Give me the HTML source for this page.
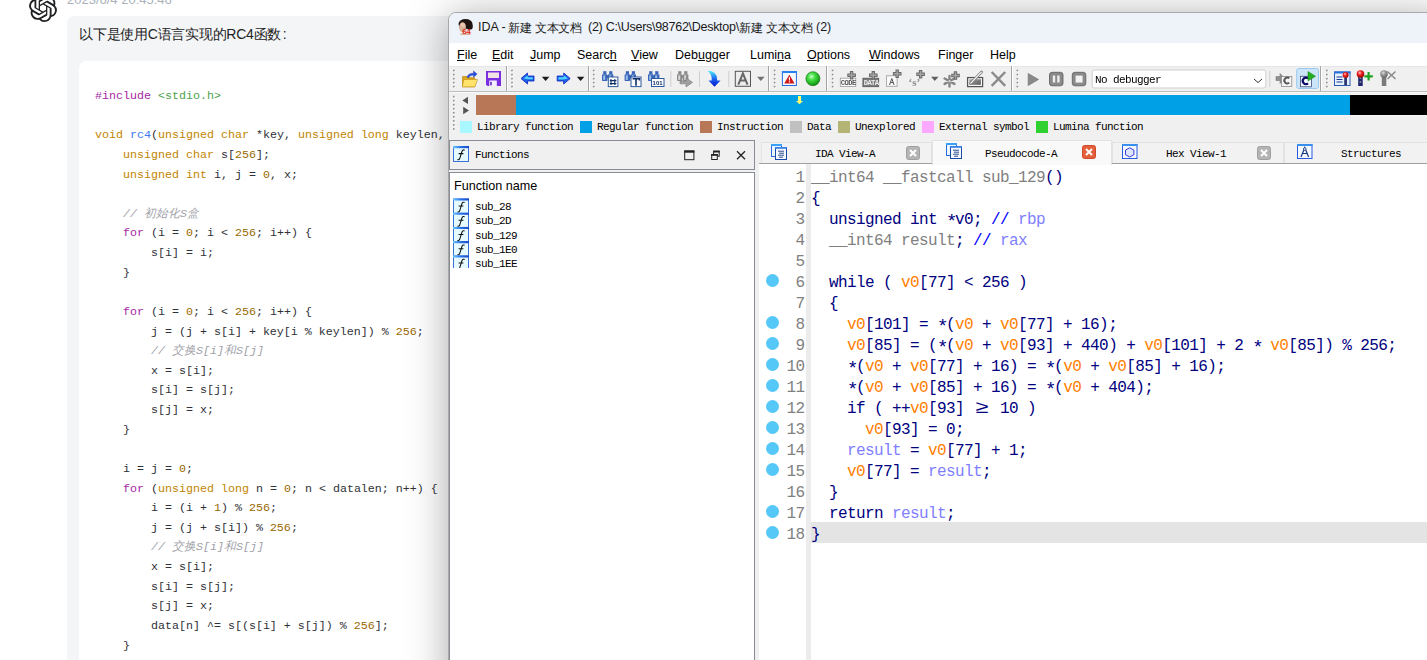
<!DOCTYPE html>
<html><head><meta charset="utf-8">
<style>
*{margin:0;padding:0;box-sizing:border-box}
html,body{width:1427px;height:660px;overflow:hidden;background:#fff;font-family:"Liberation Sans",sans-serif;position:relative}
.a{position:absolute}
.mono{font-family:"Liberation Mono",monospace}
/* chat */
#bubble{left:67px;top:16px;width:1400px;height:700px;background:#f4f5f7;border-radius:7px}
#code{left:79px;top:61px;width:1400px;height:700px;background:#fff;border-radius:7px}
#cl{left:95px;top:87px;font-family:"Liberation Mono",monospace;font-size:11.67px;line-height:19.63px;color:#2f3137;white-space:pre}
.kw{color:#a626a4}.ty{color:#c18401}.nu{color:#986801}.fn{color:#4078f2}.st{color:#50a14f}.cm{color:#a0a1a7;font-style:italic}
/* ida */
#code2{font-family:"Liberation Mono",monospace;font-size:16px;letter-spacing:-0.6px;line-height:21px;white-space:pre;color:#000080}

#win{left:448px;top:12px;width:1000px;height:700px;background:#f0f0f0;border:1px solid #a8a8a8;border-radius:8px 0 0 0;box-shadow:0 4px 40px rgba(0,0,0,0.34)}
.menu{top:48px;font-size:12.5px;color:#000;white-space:nowrap}
.leg{top:121px;width:12px;height:12px}
.legt{top:121px;font-family:"Liberation Mono",monospace;font-size:11px;letter-spacing:-0.6px;color:#000;white-space:nowrap}
.tab{top:142px;height:21px;background:#f2f2f2;border:1px solid #e2e2e2;border-bottom:none}
.tab.act{top:140px;height:25px;background:#f9f9f9;z-index:2}
.tabt{top:148px;font-family:"Liberation Mono",monospace;font-size:11px;letter-spacing:-0.6px;color:#000;white-space:nowrap;z-index:3}
#lnum{left:760px;top:168px;width:44.4px;text-align:right;font-family:"Liberation Mono",monospace;font-size:16px;letter-spacing:-0.6px;line-height:21px;color:#808080;white-space:pre}
#code2{left:811px;top:168px}

.v{color:#ff8000}.r{color:#8080ff}.g{color:#808080}.c{color:#0000ff}
.dot{left:766px;width:13px;height:13px;border-radius:50%;background:#55c8f8}
.ttl{top:20px;font-size:12.5px;color:#1a1a1a;white-space:nowrap}.cj{font-size:12px;letter-spacing:-0.2px}
.bmf{font-family:"Liberation Mono",monospace;font-size:11px;letter-spacing:-0.6px;color:#000;white-space:nowrap}
.ast{display:inline-block;width:9px;text-align:center;font-size:19px;line-height:10px;letter-spacing:0;position:relative;top:3px}
</style></head><body>
<div class="a" id="bubble"></div>
<div class="a" id="code"></div>

<svg class="a" style="left:29px;top:-6px" width="28" height="28" viewBox="0 0 24 24"><path fill="#202123" d="M22.2819 9.8211a5.9847 5.9847 0 0 0-.5157-4.9108 6.0462 6.0462 0 0 0-6.5098-2.9A6.0651 6.0651 0 0 0 4.9807 4.1818a5.9847 5.9847 0 0 0-3.9977 2.9 6.0462 6.0462 0 0 0 .7427 7.0966 5.98 5.98 0 0 0 .511 4.9107 6.051 6.051 0 0 0 6.5146 2.9001A5.9847 5.9847 0 0 0 13.2599 24a6.0557 6.0557 0 0 0 5.7718-4.2058 5.9894 5.9894 0 0 0 3.9977-2.9001 6.0557 6.0557 0 0 0-.7475-7.0729zm-9.022 12.6081a4.4755 4.4755 0 0 1-2.8764-1.0408l.1419-.0804 4.7783-2.7582a.7948.7948 0 0 0 .3927-.6813v-6.7369l2.02 1.1686a.071.071 0 0 1 .038.052v5.5826a4.504 4.504 0 0 1-4.4945 4.4944zm-9.6607-4.1254a4.4708 4.4708 0 0 1-.5346-3.0137l.142.0852 4.783 2.7582a.7712.7712 0 0 0 .7806 0l5.8428-3.3685v2.3324a.0804.0804 0 0 1-.0332.0615L9.74 19.9502a4.4992 4.4992 0 0 1-6.1408-1.6464zM2.3408 7.8956a4.485 4.485 0 0 1 2.3655-1.9728V11.6a.7664.7664 0 0 0 .3879.6765l5.8144 3.3543-2.0201 1.1685a.0757.0757 0 0 1-.071 0l-4.8303-2.7865A4.504 4.504 0 0 1 2.3408 7.872zm16.5963 3.8558L13.1038 8.364 15.1192 7.2a.0757.0757 0 0 1 .071 0l4.8303 2.7913a4.4944 4.4944 0 0 1-.6765 8.1042v-5.6772a.79.79 0 0 0-.407-.667zm2.0107-3.0231l-.142-.0852-4.7735-2.7818a.7759.7759 0 0 0-.7854 0L9.409 9.2297V6.8974a.0662.0662 0 0 1 .0284-.0615l4.8303-2.7866a4.4992 4.4992 0 0 1 6.6802 4.66zM8.3065 12.863l-2.02-1.1638a.0804.0804 0 0 1-.038-.0567V6.0742a4.4992 4.4992 0 0 1 7.3757-3.4537l-.142.0805L8.704 5.459a.7948.7948 0 0 0-.3927.6813zm1.0976-2.3654l2.602-1.4998 2.6069 1.4998v2.9994l-2.5974 1.4997-2.6067-1.4997Z"/></svg>
<div class="a" style="left:67px;top:-8px;font-size:13px;color:#aab1bb;white-space:nowrap">2023/6/4 20:45:46</div>
<div class="a" id="intro" style="left:79px;top:26px;font-size:14px;letter-spacing:-0.25px;color:#222;white-space:nowrap">以下是使用C语言实现的RC4函数<span style="margin-left:1.5px">:</span></div>
<div class="a" id="cl"><span class="kw">#include</span> <span class="st">&lt;stdio.h&gt;</span>

<span class="ty">void</span> <span class="fn">rc4</span>(<span class="ty">unsigned</span> <span class="ty">char</span> *key, <span class="ty">unsigned</span> <span class="ty">long</span> keylen, <span class="ty">unsigned</span> <span class="ty">char</span> *data, <span class="ty">unsigned</span> <span class="ty">long</span> datalen) {
    <span class="ty">unsigned</span> <span class="ty">char</span> s[<span class="nu">256</span>];
    <span class="ty">unsigned</span> <span class="ty">int</span> i, j = <span class="nu">0</span>, x;

    <span class="cm">// 初始化S盒</span>
    <span class="kw">for</span> (i = <span class="nu">0</span>; i &lt; <span class="nu">256</span>; i++) {
        s[i] = i;
    }

    <span class="kw">for</span> (i = <span class="nu">0</span>; i &lt; <span class="nu">256</span>; i++) {
        j = (j + s[i] + key[i % keylen]) % <span class="nu">256</span>;
        <span class="cm">// 交换S[i]和S[j]</span>
        x = s[i];
        s[i] = s[j];
        s[j] = x;
    }

    i = j = <span class="nu">0</span>;
    <span class="kw">for</span> (<span class="ty">unsigned</span> <span class="ty">long</span> n = <span class="nu">0</span>; n &lt; datalen; n++) {
        i = (i + <span class="nu">1</span>) % <span class="nu">256</span>;
        j = (j + s[i]) % <span class="nu">256</span>;
        <span class="cm">// 交换S[i]和S[j]</span>
        x = s[i];
        s[i] = s[j];
        s[j] = x;
        data[n] ^= s[(s[i] + s[j]) % <span class="nu">256</span>];
    }
}</div>


<div class="a" id="win"></div>
<div class="a" style="left:449px;top:13px;width:980px;height:30px;background:#eef3f9;border-radius:7px 0 0 0"></div>
<svg class="a" style="left:455px;top:17px" width="20" height="20" viewBox="455 17 20 20">
<ellipse cx="465.5" cy="24" rx="7" ry="5" fill="#1e1412"/><circle cx="469.6" cy="26.5" r="3.2" fill="#1e1412"/>
<ellipse cx="462.5" cy="27.3" rx="3.4" ry="5" fill="#d9b098"/><ellipse cx="463" cy="25" rx="2.4" ry="2" fill="#e8c8b0"/>
<ellipse cx="465.5" cy="34.2" rx="5.5" ry="0.9" fill="#d9b098"/>
<text x="462.3" y="34" font-family="Liberation Sans" font-weight="bold" font-size="8" letter-spacing="-0.5" fill="#e02818">64</text>
</svg><div class="a ttl" style="left:478px">IDA -</div>
<div class="a ttl cj" style="left:508px">新建 文本文档</div>
<div class="a ttl" style="left:588px;letter-spacing:-0.28px">(2) C:\Users\98762\Desktop\</div>
<div class="a ttl cj" style="left:739px">新建 文本文档</div>
<div class="a ttl" style="left:816px">(2)</div>
<div class="a" style="left:449px;top:43px;width:980px;height:23px;background:#fff"></div>
<div class="a menu" style="left:457px"><u>F</u>ile</div>
<div class="a menu" style="left:492px"><u>E</u>dit</div>
<div class="a menu" style="left:530px"><u>J</u>ump</div>
<div class="a menu" style="left:577px">Searc<u>h</u></div>
<div class="a menu" style="left:631px"><u>V</u>iew</div>
<div class="a menu" style="left:675px">Deb<u>u</u>gger</div>
<div class="a menu" style="left:750px">Lumi<u>n</u>a</div>
<div class="a menu" style="left:807px"><u>O</u>ptions</div>
<div class="a menu" style="left:869px"><u>W</u>indows</div>
<div class="a menu" style="left:938px">Finger</div>
<div class="a menu" style="left:990px">Help</div>
<div class="a" style="left:449px;top:66px;width:980px;height:25px;background:#f0f0f0;border-top:1px solid #e6e6e6"></div>
<div class="a" style="left:449px;top:91px;width:980px;height:1px;background:#bdbdbd"></div>
<div class="a" style="left:449px;top:92px;width:980px;height:1px;background:#fafafa"></div>
<div class="a" style="left:476px;top:94px;width:960px;height:1px;background:#fbf6f2"></div><div class="a" style="left:476px;top:115px;width:960px;height:1px;background:#fbf6f2"></div>
<!--TB--><svg class="a" style="left:449px;top:66px;will-change:transform" width="980" height="26" viewBox="449 66 980 26"><rect x="453.8" y="70.5" width="1.6" height="1.6" fill="#ffffff"/><rect x="453" y="69.7" width="1.6" height="1.6" fill="#8c8c8c"/><rect x="453.8" y="74.6" width="1.6" height="1.6" fill="#ffffff"/><rect x="453" y="73.8" width="1.6" height="1.6" fill="#8c8c8c"/><rect x="453.8" y="78.7" width="1.6" height="1.6" fill="#ffffff"/><rect x="453" y="77.9" width="1.6" height="1.6" fill="#8c8c8c"/><rect x="453.8" y="82.6" width="1.6" height="1.6" fill="#ffffff"/><rect x="453" y="81.8" width="1.6" height="1.6" fill="#8c8c8c"/><rect x="453.8" y="86.6" width="1.6" height="1.6" fill="#ffffff"/><rect x="453" y="85.8" width="1.6" height="1.6" fill="#8c8c8c"/><path d="M462.5 76.5 h5 l1 1.2 h6.3 v2 h2.6 l-2.6 7.3 h-12.3 z" fill="#d9a520" stroke="#b98a10" stroke-width="0.7"/><path d="M464.3 80 h12.8 l-2.4 6.5 h-12 z" fill="#ffe36a"/><path d="M467 77 q1.5-4 6.5-3.8 v-2.3 l3.6 3.2 -3.6 3.2 v-2.2 q-3.5 0 -5 2.8z" fill="#2850e0" stroke="#1a2ea0" stroke-width="0.4"/><path d="M486 71 h15 v15 h-13.5 l-1.5-1.5 z" fill="#7a2ee0"/><rect x="488" y="72.5" width="11" height="5.5" fill="#f2e2e6"/><rect x="489.3" y="80.5" width="7.5" height="5.5" fill="#f4f0ff"/><rect x="490.2" y="81.8" width="1.6" height="3.5" fill="#6a28c8"/><rect x="506" y="66" width="1" height="25" fill="#a4a4a4"/><rect x="507" y="66" width="1" height="25" fill="#ffffff"/><rect x="512.0" y="70.5" width="1.6" height="1.6" fill="#ffffff"/><rect x="511.2" y="69.7" width="1.6" height="1.6" fill="#8c8c8c"/><rect x="512.0" y="74.6" width="1.6" height="1.6" fill="#ffffff"/><rect x="511.2" y="73.8" width="1.6" height="1.6" fill="#8c8c8c"/><rect x="512.0" y="78.7" width="1.6" height="1.6" fill="#ffffff"/><rect x="511.2" y="77.9" width="1.6" height="1.6" fill="#8c8c8c"/><rect x="512.0" y="82.6" width="1.6" height="1.6" fill="#ffffff"/><rect x="511.2" y="81.8" width="1.6" height="1.6" fill="#8c8c8c"/><rect x="512.0" y="86.6" width="1.6" height="1.6" fill="#ffffff"/><rect x="511.2" y="85.8" width="1.6" height="1.6" fill="#8c8c8c"/><path d="M521 78.5 L527.5 73 V76 H534 V81 H527.5 V84 Z" fill="#1e62e8" stroke="#0a20c0" stroke-width="0.8"/><path d="M523.5 78.5 L527.8 75.2 V77.2 H532.8 V79.2 H527.8 Z" fill="#55e0ff" opacity="0.9"/><path d="M541.8 76.8 L549.4 76.8 L545.5999999999999 81 Z" fill="#1a1a1a"/><path d="M570.2 78.5 L563.7 73 V76 H557.2 V81 H563.7 V84 Z" fill="#1e62e8" stroke="#0a20c0" stroke-width="0.8"/><path d="M558.4 77.2 H563.6 V75.2 L568 78.5 L563.6 79.5 H558.4 Z" fill="#55e0ff" opacity="0.9"/><path d="M576.8 76.8 L584.4 76.8 L580.5999999999999 81 Z" fill="#1a1a1a"/><rect x="588" y="66" width="1" height="25" fill="#a4a4a4"/><rect x="589" y="66" width="1" height="25" fill="#ffffff"/><rect x="593.6999999999999" y="70.5" width="1.6" height="1.6" fill="#ffffff"/><rect x="592.9" y="69.7" width="1.6" height="1.6" fill="#8c8c8c"/><rect x="593.6999999999999" y="74.6" width="1.6" height="1.6" fill="#ffffff"/><rect x="592.9" y="73.8" width="1.6" height="1.6" fill="#8c8c8c"/><rect x="593.6999999999999" y="78.7" width="1.6" height="1.6" fill="#ffffff"/><rect x="592.9" y="77.9" width="1.6" height="1.6" fill="#8c8c8c"/><rect x="593.6999999999999" y="82.6" width="1.6" height="1.6" fill="#ffffff"/><rect x="592.9" y="81.8" width="1.6" height="1.6" fill="#8c8c8c"/><rect x="593.6999999999999" y="86.6" width="1.6" height="1.6" fill="#ffffff"/><rect x="592.9" y="85.8" width="1.6" height="1.6" fill="#8c8c8c"/><rect x="603.2" y="71.2" width="3.2" height="3" fill="#3a64b8"/><rect x="602" y="74.2" width="5.4" height="6.8" rx="0.8" fill="#3a64b8"/><rect x="603.2" y="75.4" width="2" height="4.5" fill="#9cc4ee"/><rect x="609.2" y="71.2" width="3.2" height="3" fill="#3a64b8"/><rect x="608" y="74.2" width="5.4" height="6.8" rx="0.8" fill="#3a64b8"/><rect x="609.2" y="75.4" width="2" height="4.5" fill="#9cc4ee"/><rect x="607" y="75.2" width="1.5" height="3" fill="#3a64b8"/><rect x="608.3" y="77" width="9.6" height="9.6" fill="#fff" stroke="#2d5aa0" stroke-width="1"/><path d="M611 79 v6 M614.8 79 v6 M609.8 80.6 h6.6 M609.8 83.6 h6.6" stroke="#0e2e66" stroke-width="1.1"/><rect x="625.8000000000001" y="71.2" width="3.2" height="3" fill="#3a64b8"/><rect x="624.6" y="74.2" width="5.4" height="6.8" rx="0.8" fill="#3a64b8"/><rect x="625.8000000000001" y="75.4" width="2" height="4.5" fill="#9cc4ee"/><rect x="631.8000000000001" y="71.2" width="3.2" height="3" fill="#3a64b8"/><rect x="630.6" y="74.2" width="5.4" height="6.8" rx="0.8" fill="#3a64b8"/><rect x="631.8000000000001" y="75.4" width="2" height="4.5" fill="#9cc4ee"/><rect x="629.6" y="75.2" width="1.5" height="3" fill="#3a64b8"/><rect x="631" y="77" width="10" height="9.6" fill="#fff" stroke="#2d5aa0" stroke-width="1"/><path d="M632.6 78.8 h6.8 v1.8 M636 78.8 v7" stroke="#0e2e66" stroke-width="1.6" fill="none"/><rect x="649.2" y="71.2" width="3.2" height="3" fill="#3a64b8"/><rect x="648" y="74.2" width="5.4" height="6.8" rx="0.8" fill="#3a64b8"/><rect x="649.2" y="75.4" width="2" height="4.5" fill="#9cc4ee"/><rect x="655.2" y="71.2" width="3.2" height="3" fill="#3a64b8"/><rect x="654" y="74.2" width="5.4" height="6.8" rx="0.8" fill="#3a64b8"/><rect x="655.2" y="75.4" width="2" height="4.5" fill="#9cc4ee"/><rect x="653" y="75.2" width="1.5" height="3" fill="#3a64b8"/><rect x="651.5" y="78.5" width="12.5" height="8" fill="#fff" stroke="#2d5aa0" stroke-width="1"/><text x="652.6" y="85.3" font-family="Liberation Sans" font-weight="bold" font-size="6" fill="#0e2e66">101</text><rect x="670.3" y="71" width="1" height="16" fill="#cfcfcf"/><rect x="678.2" y="71.2" width="3.2" height="3" fill="#8a8a8a"/><rect x="677" y="74.2" width="5.4" height="6.8" rx="0.8" fill="#8a8a8a"/><rect x="678.2" y="75.4" width="2" height="4.5" fill="#d8d8d8"/><rect x="684.2" y="71.2" width="3.2" height="3" fill="#8a8a8a"/><rect x="683" y="74.2" width="5.4" height="6.8" rx="0.8" fill="#8a8a8a"/><rect x="684.2" y="75.4" width="2" height="4.5" fill="#d8d8d8"/><rect x="682" y="75.2" width="1.5" height="3" fill="#8a8a8a"/><path d="M680 81 h6 v-3.2 l6.5 4.6 -6.5 4.6 v-3.2 h-6 z" fill="#a0a0a0" stroke="#7a7a7a" stroke-width="0.6"/><rect x="699" y="71" width="1" height="16" fill="#cfcfcf"/><defs><linearGradient id="bda" x1="0" y1="0" x2="0" y2="1"><stop offset="0" stop-color="#50f0ff"/><stop offset="0.45" stop-color="#2070f0"/><stop offset="1" stop-color="#0010d0"/></linearGradient></defs><path d="M707.5 70.8 q9.6 0.2 9.6 8.6 v1.2 h3.4 l-6 6.2 -6 -6.2 h3.2 v-1.6 q0 -4.8 -4.2 -8.2z" fill="url(#bda)"/><rect x="728.3" y="71" width="1" height="16" fill="#cfcfcf"/><rect x="735.3" y="71.3" width="15.2" height="15" fill="#ececec" stroke="#555" stroke-width="1"/><path d="M738.3 84.6 L742.9 73.4 L747.5 84.6 M740.1 80.4 H745.7" stroke="#666" stroke-width="2" fill="none"/><path d="M757 76.8 L764.6 76.8 L760.8 81 Z" fill="#707070"/><rect x="768" y="66" width="1" height="25" fill="#a4a4a4"/><rect x="769" y="66" width="1" height="25" fill="#ffffff"/><rect x="774.5999999999999" y="70.5" width="1.6" height="1.6" fill="#ffffff"/><rect x="773.8" y="69.7" width="1.6" height="1.6" fill="#8c8c8c"/><rect x="774.5999999999999" y="74.6" width="1.6" height="1.6" fill="#ffffff"/><rect x="773.8" y="73.8" width="1.6" height="1.6" fill="#8c8c8c"/><rect x="774.5999999999999" y="78.7" width="1.6" height="1.6" fill="#ffffff"/><rect x="773.8" y="77.9" width="1.6" height="1.6" fill="#8c8c8c"/><rect x="774.5999999999999" y="82.6" width="1.6" height="1.6" fill="#ffffff"/><rect x="773.8" y="81.8" width="1.6" height="1.6" fill="#8c8c8c"/><rect x="774.5999999999999" y="86.6" width="1.6" height="1.6" fill="#ffffff"/><rect x="773.8" y="85.8" width="1.6" height="1.6" fill="#8c8c8c"/><rect x="782.4" y="71.5" width="14" height="14" fill="#f4fbff" stroke="#2a6ae0" stroke-width="1"/><rect x="782" y="71" width="15" height="2" fill="#2a80f0"/><path d="M789.4 74.8 L794.6 83.5 H784.2 Z" fill="#d01818"/><rect x="788.9" y="77.2" width="1.1" height="3.3" fill="#fff"/><rect x="788.9" y="81.3" width="1.1" height="1.1" fill="#fff"/><defs><radialGradient id="gb" cx="0.4" cy="0.35" r="0.7"><stop offset="0" stop-color="#c8ffc8"/><stop offset="0.35" stop-color="#44e044"/><stop offset="1" stop-color="#0a8a0a"/></radialGradient><radialGradient id="rb" cx="0.4" cy="0.35" r="0.7"><stop offset="0" stop-color="#ffc8c8"/><stop offset="0.4" stop-color="#f02020"/><stop offset="1" stop-color="#900000"/></radialGradient><radialGradient id="gyb" cx="0.4" cy="0.35" r="0.7"><stop offset="0" stop-color="#e0e0e0"/><stop offset="0.4" stop-color="#9a9a9a"/><stop offset="1" stop-color="#606060"/></radialGradient></defs><circle cx="812.9" cy="78.7" r="7" fill="url(#gb)" stroke="#0a6a0a" stroke-width="0.6"/><rect x="826" y="66" width="1" height="25" fill="#a4a4a4"/><rect x="827" y="66" width="1" height="25" fill="#ffffff"/><rect x="832.5999999999999" y="70.5" width="1.6" height="1.6" fill="#ffffff"/><rect x="831.8" y="69.7" width="1.6" height="1.6" fill="#8c8c8c"/><rect x="832.5999999999999" y="74.6" width="1.6" height="1.6" fill="#ffffff"/><rect x="831.8" y="73.8" width="1.6" height="1.6" fill="#8c8c8c"/><rect x="832.5999999999999" y="78.7" width="1.6" height="1.6" fill="#ffffff"/><rect x="831.8" y="77.9" width="1.6" height="1.6" fill="#8c8c8c"/><rect x="832.5999999999999" y="82.6" width="1.6" height="1.6" fill="#ffffff"/><rect x="831.8" y="81.8" width="1.6" height="1.6" fill="#8c8c8c"/><rect x="832.5999999999999" y="86.6" width="1.6" height="1.6" fill="#ffffff"/><rect x="831.8" y="85.8" width="1.6" height="1.6" fill="#8c8c8c"/><rect x="840.3" y="78.2" width="15.5" height="8.2" fill="#fff" stroke="#9a9a9a" stroke-width="0.8"/><text x="840.8" y="85.2" font-family="Liberation Mono" font-weight="bold" font-size="7.2" letter-spacing="-0.6" fill="#555">CODE</text><path d="M847.3000000000001 75.3 h8.6 M851.6 71.0 v8.6" stroke="#6a6a6a" stroke-width="3.4"/><path d="M848.3000000000001 75.3 h6.6 M851.6 72.0 v6.6" stroke="#a4a4a4" stroke-width="1.4"/><rect x="862.9" y="78.2" width="15.8" height="8.5" fill="#7a7a7a" stroke="#555" stroke-width="0.8"/><text x="863.7" y="85.2" font-family="Liberation Mono" font-weight="bold" font-size="7.2" letter-spacing="-0.6" fill="#eee">DATA</text><path d="M869.0 75.3 h8.6 M873.3 71.0 v8.6" stroke="#6a6a6a" stroke-width="3.4"/><path d="M870.0 75.3 h6.6 M873.3 72.0 v6.6" stroke="#a4a4a4" stroke-width="1.4"/><rect x="886.6" y="75.8" width="10.5" height="10.5" fill="#fafafa" stroke="#9a9a9a" stroke-width="0.8"/><path d="M889.5 85 l2.3-6.5 2.3 6.5 M890.5 82.5 h2.6" stroke="#555" stroke-width="1" fill="none"/><path d="M892.9000000000001 73.8 h8.6 M897.2 69.5 v8.6" stroke="#6a6a6a" stroke-width="3.4"/><path d="M893.9000000000001 73.8 h6.6 M897.2 70.5 v6.6" stroke="#a4a4a4" stroke-width="1.4"/><text x="908.5" y="86" font-family="Liberation Serif" font-weight="bold" font-size="11" fill="#8a8a8a">‘s’</text><path d="M916.3000000000001 74.3 h8.6 M920.6 70.0 v8.6" stroke="#6a6a6a" stroke-width="3.4"/><path d="M917.3000000000001 74.3 h6.6 M920.6 71.0 v6.6" stroke="#a4a4a4" stroke-width="1.4"/><path d="M931 76.8 L938.6 76.8 L934.8 81 Z" fill="#606060"/><path d="M949.5 76 v10.5 M944.6 78.5 l9.8 5.4 M944.6 83.9 l9.8 -5.4" stroke="#858585" stroke-width="2.4" stroke-linecap="round"/><circle cx="949.5" cy="81.2" r="1.2" fill="#d0d0d0"/><path d="M951.2 75.5 h8.6 M955.5 71.2 v8.6" stroke="#6a6a6a" stroke-width="3.4"/><path d="M952.2 75.5 h6.6 M955.5 72.2 v6.6" stroke="#a4a4a4" stroke-width="1.4"/><rect x="967.6" y="77.6" width="15" height="9" fill="#fff" stroke="#555" stroke-width="1.3"/><defs><linearGradient id="edg" x1="0" y1="0" x2="1" y2="1"><stop offset="0" stop-color="#a8a8a8"/><stop offset="1" stop-color="#5a5a5a"/></linearGradient></defs><rect x="969.3" y="79.2" width="11.6" height="5.6" fill="url(#edg)"/><path d="M970.6 83.4 L981.6 72" stroke="#777" stroke-width="2.6" stroke-linecap="round"/><path d="M970.8 83.2 L981.4 72.2" stroke="#fff" stroke-width="1.2" stroke-linecap="round"/><path d="M991.7 72 l13.5 13.8 M1005.2 72 l-13.5 13.8" stroke="#8a8a8a" stroke-width="2.4"/><rect x="1011" y="66" width="1" height="25" fill="#a4a4a4"/><rect x="1012" y="66" width="1" height="25" fill="#ffffff"/><rect x="1017.4" y="70.5" width="1.6" height="1.6" fill="#ffffff"/><rect x="1016.6" y="69.7" width="1.6" height="1.6" fill="#8c8c8c"/><rect x="1017.4" y="74.6" width="1.6" height="1.6" fill="#ffffff"/><rect x="1016.6" y="73.8" width="1.6" height="1.6" fill="#8c8c8c"/><rect x="1017.4" y="78.7" width="1.6" height="1.6" fill="#ffffff"/><rect x="1016.6" y="77.9" width="1.6" height="1.6" fill="#8c8c8c"/><rect x="1017.4" y="82.6" width="1.6" height="1.6" fill="#ffffff"/><rect x="1016.6" y="81.8" width="1.6" height="1.6" fill="#8c8c8c"/><rect x="1017.4" y="86.6" width="1.6" height="1.6" fill="#ffffff"/><rect x="1016.6" y="85.8" width="1.6" height="1.6" fill="#8c8c8c"/><path d="M1028.2 73.5 L1038.5 79.5 L1028.2 85.5 Z" fill="#8a8a8a" stroke="#6a6a6a" stroke-width="0.6"/><rect x="1049.5" y="72.3" width="13.5" height="13.5" rx="2.5" fill="#8a8a8a" stroke="#5a5a5a" stroke-width="0.8"/><rect x="1052.8" y="75.5" width="2.4" height="7" fill="#eee"/><rect x="1057.2" y="75.5" width="2.4" height="7" fill="#eee"/><rect x="1072.3" y="72.3" width="13.5" height="13.5" rx="2.5" fill="#8a8a8a" stroke="#5a5a5a" stroke-width="0.8"/><rect x="1075.6" y="75.6" width="7" height="7" fill="#f2f2f2"/><rect x="1092.2" y="70" width="173.6" height="18" rx="2" fill="#fff" stroke="#cfcfcf" stroke-width="1"/><path d="M1254 79 l4 3.6 4 -3.6" stroke="#333" stroke-width="1" fill="none"/><rect x="1269.3" y="71" width="1" height="16" fill="#cfcfcf"/><path d="M1276 76.5 h4 v-3 l5 5 -5 5 v-3 h-4 z" fill="#909090" stroke="#6a6a6a" stroke-width="0.5"/><rect x="1281.5" y="76.5" width="10.3" height="10" fill="#f4f4f4" stroke="#8a8a8a" stroke-width="0.8"/><path d="M1289.2 78.3 A2.8 3 0 1 0 1289.2 82.6" stroke="#555" stroke-width="2" fill="none"/><rect x="1296.7" y="68.5" width="21.8" height="20" rx="2" fill="#cce4f7" stroke="#99c9ef" stroke-width="1"/><rect x="1300.5" y="76.3" width="11" height="10.5" fill="#f4f8ff" stroke="#3a4a7a" stroke-width="0.8"/><path d="M1308 78.6 A3 3.3 0 1 0 1308 83.2" stroke="#0c0c68" stroke-width="2.2" fill="none"/><path d="M1308 71.5 L1315.5 76.2 L1308 81 Z" fill="#20b020" stroke="#108010" stroke-width="0.5"/><rect x="1320" y="66" width="1" height="25" fill="#a4a4a4"/><rect x="1321" y="66" width="1" height="25" fill="#ffffff"/><rect x="1326.8" y="70.5" width="1.6" height="1.6" fill="#ffffff"/><rect x="1326" y="69.7" width="1.6" height="1.6" fill="#8c8c8c"/><rect x="1326.8" y="74.6" width="1.6" height="1.6" fill="#ffffff"/><rect x="1326" y="73.8" width="1.6" height="1.6" fill="#8c8c8c"/><rect x="1326.8" y="78.7" width="1.6" height="1.6" fill="#ffffff"/><rect x="1326" y="77.9" width="1.6" height="1.6" fill="#8c8c8c"/><rect x="1326.8" y="82.6" width="1.6" height="1.6" fill="#ffffff"/><rect x="1326" y="81.8" width="1.6" height="1.6" fill="#8c8c8c"/><rect x="1326.8" y="86.6" width="1.6" height="1.6" fill="#ffffff"/><rect x="1326" y="85.8" width="1.6" height="1.6" fill="#8c8c8c"/><rect x="1334.5" y="72" width="15.5" height="13.5" fill="#e8f2ff" stroke="#2a5ab0" stroke-width="1"/><rect x="1334" y="71.5" width="16.5" height="2" fill="#2a70e0"/><path d="M1336.5 77 h6 M1336.5 79.5 h6 M1336.5 82 h6" stroke="#1a3a90" stroke-width="1"/><rect x="1344.2" y="78" width="2.8" height="7" fill="#303a70"/><circle cx="1345.6" cy="75" r="3" fill="url(#rb)"/><rect x="1358.2" y="76" width="4.5" height="10" fill="#1a2470"/><circle cx="1360.4" cy="78" r="1" fill="#888"/><circle cx="1360.4" cy="82" r="1" fill="#888"/><circle cx="1360.5" cy="74" r="3.8" fill="url(#rb)"/><path d="M1364.3999999999999 76.3 h8.4 M1368.6 72.1 v8.4" stroke="#20a020" stroke-width="2.2"/><rect x="1381.8" y="76" width="4.5" height="10" fill="#7a7a7a"/><circle cx="1384" cy="74" r="3.8" fill="url(#gyb)"/><path d="M1387.5 71.5 l8 7.5 M1395.5 71.5 l-8 7.5" stroke="#8a8a8a" stroke-width="1.5"/></svg><div class="a bmf" style="left:1095px;top:74px">No debugger</div><!--/TB-->
<!-- nav bar -->
<div class="a" style="left:476px;top:95px;width:40px;height:20px;background:#b87858"></div>
<div class="a" style="left:516px;top:95px;width:834px;height:20px;background:#00a0e6"></div>
<div class="a" style="left:1350px;top:95px;width:80px;height:20px;background:#000"></div>
<!-- legend -->
<div class="a leg" style="left:460px;background:#aaf8ff"></div><div class="a legt" style="left:477px">Library function</div>
<div class="a leg" style="left:580px;background:#00a0e6"></div><div class="a legt" style="left:597px">Regular function</div>
<div class="a leg" style="left:700px;background:#b87858"></div><div class="a legt" style="left:717px">Instruction</div>
<div class="a leg" style="left:790px;background:#c0c0c0"></div><div class="a legt" style="left:807px">Data</div>
<div class="a leg" style="left:838px;background:#b4b474"></div><div class="a legt" style="left:855px">Unexplored</div>
<div class="a leg" style="left:922px;background:#ffa8ff"></div><div class="a legt" style="left:939px">External symbol</div>
<div class="a leg" style="left:1036px;background:#30d030"></div><div class="a legt" style="left:1053px">Lumina function</div>
<!-- functions pane -->
<div class="a" style="left:449px;top:140px;width:306px;height:30px;background:#f0f0f0;border:1px solid #878c94"></div>
<div class="a legt" style="left:475px;top:149px">Functions</div>
<div class="a" style="left:449px;top:172px;width:306px;height:500px;background:#fff;border:1px solid #878c94"></div>
<div class="a" style="left:454px;top:179px;font-size:12.6px;color:#000">Function name</div>
<!-- tabs -->
<div class="a" style="left:759px;top:163px;width:680px;height:1px;background:#a0a0a0"></div>
<div class="a tab" style="left:761px;width:171px"></div>
<div class="a tab act" style="left:932px;width:180px"></div>
<div class="a tab" style="left:1112px;width:172px"></div>
<div class="a tab" style="left:1284px;width:160px"></div>
<div class="a tabt" style="left:815px">IDA View-A</div>
<div class="a tabt" style="left:985px">Pseudocode-A</div>
<div class="a tabt" style="left:1166px">Hex View-1</div>
<div class="a tabt" style="left:1341px">Structures</div>
<div class="a" style="left:759px;top:164px;width:680px;height:500px;background:#fff"></div>
<div class="a" style="left:806px;top:164px;width:5px;height:500px;background:#ececec"></div>
<div class="a" style="left:811px;top:522px;width:620px;height:21px;background:#e4e4e4"></div>
<div class="a dot" style="top:274px"></div><div class="a dot" style="top:316px"></div><div class="a dot" style="top:337px"></div><div class="a dot" style="top:358px"></div><div class="a dot" style="top:379px"></div><div class="a dot" style="top:400px"></div><div class="a dot" style="top:421px"></div><div class="a dot" style="top:442px"></div><div class="a dot" style="top:463px"></div><div class="a dot" style="top:505px"></div><div class="a dot" style="top:526px"></div><div class="a" id="lnum">1
2
3
4
5
6
7
8
9
10
11
12
13
14
15
16
17
18</div>
<div class="a" id="code2"><span class="g">__int64 __fastcall sub_129</span>()
{
  unsigned int <span class="ast">*</span>v0; <span class="c">// </span><span class="r">rbp</span>
  <span class="g">__int64 result</span>; <span class="c">// </span><span class="r">rax</span>

  while ( <span class="v">v0</span>[77] &lt; 256 )
  {
    <span class="v">v0</span>[101] = <span class="ast">*</span>(<span class="v">v0</span> + <span class="v">v0</span>[77] + 16);
    <span class="v">v0</span>[85] = (<span class="ast">*</span>(<span class="v">v0</span> + <span class="v">v0</span>[93] + 440) + <span class="v">v0</span>[101] + 2 <span class="ast">*</span> <span class="v">v0</span>[85]) % 256;
    <span class="ast">*</span>(<span class="v">v0</span> + <span class="v">v0</span>[77] + 16) = <span class="ast">*</span>(<span class="v">v0</span> + <span class="v">v0</span>[85] + 16);
    <span class="ast">*</span>(<span class="v">v0</span> + <span class="v">v0</span>[85] + 16) = <span class="ast">*</span>(<span class="v">v0</span> + 404);
    if ( ++<span class="v">v0</span>[93] <span style="display:inline-block;width:18px;text-align:center;letter-spacing:0;font-size:18px;line-height:10px;transform:scaleX(1.3)">≥</span> 10 )
      <span class="v">v0</span>[93] = 0;
    <span class="r">result</span> = <span class="v">v0</span>[77] + 1;
    <span class="v">v0</span>[77] = <span class="r">result</span>;
  }
  return <span class="r">result</span>;
}</div>
<!--P2--><svg class="a" style="left:0;top:0;z-index:5" width="1427" height="660" viewBox="0 0 1427 660"><rect x="453.8" y="96.6" width="1.6" height="1.6" fill="#fff"/><rect x="453" y="95.8" width="1.6" height="1.6" fill="#8c8c8c"/><rect x="453.8" y="100.64999999999999" width="1.6" height="1.6" fill="#fff"/><rect x="453" y="99.85" width="1.6" height="1.6" fill="#8c8c8c"/><rect x="453.8" y="104.69999999999999" width="1.6" height="1.6" fill="#fff"/><rect x="453" y="103.89999999999999" width="1.6" height="1.6" fill="#8c8c8c"/><rect x="453.8" y="108.74999999999999" width="1.6" height="1.6" fill="#fff"/><rect x="453" y="107.94999999999999" width="1.6" height="1.6" fill="#8c8c8c"/><rect x="453.8" y="112.8" width="1.6" height="1.6" fill="#fff"/><rect x="453" y="112.0" width="1.6" height="1.6" fill="#8c8c8c"/><rect x="453.8" y="116.85" width="1.6" height="1.6" fill="#fff"/><rect x="453" y="116.05" width="1.6" height="1.6" fill="#8c8c8c"/><rect x="453.8" y="120.89999999999999" width="1.6" height="1.6" fill="#fff"/><rect x="453" y="120.1" width="1.6" height="1.6" fill="#8c8c8c"/><rect x="453.8" y="124.94999999999999" width="1.6" height="1.6" fill="#fff"/><rect x="453" y="124.14999999999999" width="1.6" height="1.6" fill="#8c8c8c"/><rect x="453.8" y="129.0" width="1.6" height="1.6" fill="#fff"/><rect x="453" y="128.2" width="1.6" height="1.6" fill="#8c8c8c"/><path d="M462.3 100.4 L468 96.8 V104 Z" fill="#555"/><path d="M469 110.4 L463.2 106.8 V114.2 Z" fill="#555"/><path d="M798 96 h3 v5 h2 l-3.5 3.3 -3.5 -3.3 h2 z" fill="#ffff70"/><defs><linearGradient id="fbar" x1="0" x2="1"><stop offset="0" stop-color="#6ac8ff"/><stop offset="0.5" stop-color="#2a70e8"/><stop offset="1" stop-color="#1a48c8"/></linearGradient><symbol id="ficon" viewBox="0 0 16 16"><rect x="0.5" y="0.5" width="15" height="15" fill="#e6fbff" stroke="#3a70d8" stroke-width="1"/><rect x="0" y="0" width="16" height="2.2" fill="url(#fbar)"/><path d="M11.6 4.2 q-1.6-0.9 -2.5 0.8 L6.6 12.8 q-0.7 1.4 -2.2 0.8 M5.6 7.6 h4.8" stroke="#101010" stroke-width="1.05" fill="none"/></symbol><symbol id="pcicon" viewBox="0 0 16 16"><rect x="0.5" y="0.5" width="10" height="12" fill="#eaf6ff" stroke="#2a6ae0" stroke-width="1"/><rect x="0" y="0" width="11" height="2" fill="#3aa0f8"/><rect x="4.5" y="3.5" width="11" height="12" fill="#f4faff" stroke="#1a4aa8" stroke-width="1"/><rect x="4" y="3" width="12" height="1.8" fill="#3a80e8"/><path d="M7 7.2 h6 M8 9.2 h5 M7 11.2 h6 M8 13.2 h4" stroke="#1a3a80" stroke-width="0.9"/></symbol></defs><use href="#ficon" x="453" y="146" width="16" height="16"/><rect x="684.7" y="151" width="9.2" height="8.7" fill="none" stroke="#222" stroke-width="1"/><rect x="684.2" y="150.5" width="10.2" height="2.2" fill="#222"/><rect x="713.6" y="151.2" width="5.6" height="5" fill="none" stroke="#222" stroke-width="1"/><rect x="713.1" y="150.7" width="6.6" height="1.8" fill="#222"/><rect x="711.7" y="154.5" width="5.6" height="5" fill="#f0f0f0" stroke="#222" stroke-width="1"/><rect x="711.2" y="154" width="6.6" height="1.8" fill="#222"/><path d="M737 151.3 l8 8 M745 151.3 l-8 8" stroke="#222" stroke-width="1.3"/><clipPath id="fl"><rect x="450" y="198" width="300" height="70"/></clipPath><g clip-path="url(#fl)"><use href="#ficon" x="453" y="198.30" width="16" height="16"/><use href="#ficon" x="453" y="212.55" width="16" height="16"/><use href="#ficon" x="453" y="226.80" width="16" height="16"/><use href="#ficon" x="453" y="241.05" width="16" height="16"/><use href="#ficon" x="453" y="255.30" width="16" height="16"/></g><use href="#pcicon" x="771" y="144" width="16" height="16"/><use href="#pcicon" x="946" y="143" width="16" height="16"/><rect x="1122.5" y="144.5" width="14.5" height="14" fill="#f4f8ff" stroke="#2a5ae0" stroke-width="1"/><rect x="1122" y="144" width="15.5" height="2" fill="#3a90f0"/><path d="M1129.7 147.8 l4.2 2.3 v4.6 l-4.2 2.3 -4.2 -2.3 v-4.6 z" fill="#dde6ff" stroke="#3a3ae0" stroke-width="1"/><rect x="1297.5" y="144.5" width="14.5" height="14" fill="#f4f8ff" stroke="#2a5ae0" stroke-width="1"/><rect x="1297" y="144" width="15.5" height="2" fill="#3a90f0"/><path d="M1301 157 l3.8 -9.5 3.8 9.5 M1302.3 153.5 h5" stroke="#1a3a80" stroke-width="1.2" fill="none"/><circle cx="1304.8" cy="149" r="1.3" fill="#f4f8ff" stroke="#1a3a80" stroke-width="0.8"/><rect x="906.5" y="146.5" width="13" height="13" rx="2" fill="#b4b4b4" stroke="#a0a0a0" stroke-width="1"/><path d="M910 150 l6 6 M916 150 l-6 6" stroke="#fff" stroke-width="1.9"/><rect x="1082.5" y="145.5" width="13" height="13" rx="2" fill="#e4603c" stroke="#d04a28" stroke-width="1"/><path d="M1086 149 l6 6 M1092 149 l-6 6" stroke="#fff" stroke-width="1.9"/><rect x="1257.5" y="146.5" width="13" height="13" rx="2" fill="#b4b4b4" stroke="#a0a0a0" stroke-width="1"/><path d="M1261 150 l6 6 M1267 150 l-6 6" stroke="#fff" stroke-width="1.9"/></svg><div class="a bmf" style="left:475px;top:201.00px">sub_28</div><div class="a bmf" style="left:475px;top:215.25px">sub_2D</div><div class="a bmf" style="left:475px;top:229.50px">sub_129</div><div class="a bmf" style="left:475px;top:243.75px">sub_1E0</div><div class="a bmf" style="left:475px;top:258.00px">sub_1EE</div><!--/P2-->
</body></html>
